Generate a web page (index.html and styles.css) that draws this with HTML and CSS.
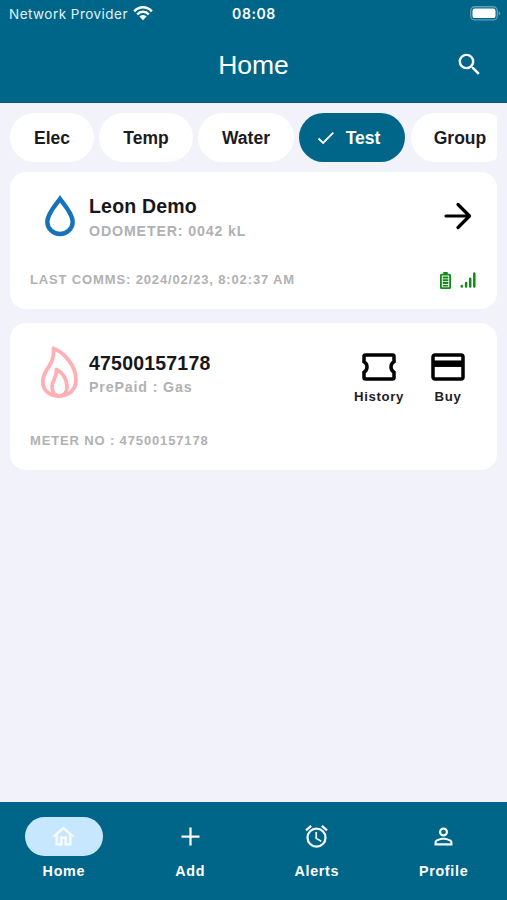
FILE: index.html
```html
<!DOCTYPE html>
<html lang="en">
<head>
<meta charset="utf-8">
<title>Home</title>
<link rel="stylesheet" href="styles.css">
</head>
<body>
<div class="app">
  <header class="top">
    <div class="status">
      <div class="carrier"><span>Network Provider</span>
        <svg class="wifi" viewBox="0 0 20 15"><path d="M1.2 5.4C6-.1 14-.1 18.8 5.4M4.2 8.5c3.2-3.6 8.4-3.6 11.6 0" fill="none" stroke="#fff" stroke-width="2.5"/><path d="M6.4 10.6c2-2 5.200-2 7.200 0L10 14.300z" fill="#fff"/></svg>
      </div>
      <span class="clock">08:08</span>
      <svg class="battery" viewBox="0 0 31 15"><rect x=".75" y=".75" width="26.500" height="13.200" rx="4" fill="none" stroke="#669fb6" stroke-width="1.300"/><rect x="2.500" y="2.600" width="23" height="9.500" rx="2.200" fill="#fff"/><path d="M28.700 5v4.800q3-2.400 0-4.800" fill="#669fb6"/></svg>
    </div>
    <div class="titlebar">
      <h1>Home</h1>
      <svg class="search" viewBox="0 0 24 24"><path d="M9.500 3A6.500 6.500 0 0 1 16 9.500c0 1.610-.59 3.090-1.560 4.230l.27.27h.79l5 5-1.500 1.500-5-5v-.79l-.27-.27A6.520 6.520 0 0 1 9.500 16a6.500 6.500 0 0 1 0-13m0 2C7 5 5 7 5 9.500S7 14 9.500 14 14 12 14 9.500 12 5 9.500 5"/></svg>
    </div>
  </header>
  <main>
    <div class="chips">
      <div class="chip elec">Elec</div>
      <div class="chip temp">Temp</div>
      <div class="chip water">Water</div>
      <div class="chip test"><svg viewBox="0 0 18 14"><path d="M1.500 7.500l4.600 4.500L16.300 1.600"/></svg>Test</div>
      <div class="chip group">Group</div>
    </div>
    <section class="card first">
      <div class="row">
        <svg class="drop" viewBox="0 0 32 42"><path d="M16 4C13 8.500 3.300 18.500 3.300 26.800a12.700 12.200 0 0 0 25.400 0C28.700 18.500 19 8.500 16 4z"/></svg>
        <div class="info"><h2>Leon Demo</h2><p class="odo">ODOMETER: 0042 kL</p></div>
        <svg class="arrow" viewBox="0 0 28 28"><path d="M2 14h23M14 2.500L25.500 14 14 25.500"/></svg>
      </div>
      <div class="foot">
        <span class="comms">LAST COMMS: 2024/02/23, 8:02:37 AM</span>
        <div class="signals">
          <svg class="cell" viewBox="0 0 11 17"><path d="M3.300 0h4.400v1.700H9.500Q11 1.700 11 3.200v12.300q0 1.500-1.500 1.500h-8Q0 17 0 15.500V3.200q0-1.500 1.500-1.500h1.800zM1.800 3.500v11.700h7.400V3.500z" fill-rule="evenodd"/><path d="M2.700 4.500h5.600v1.900H2.700zM2.700 7.300h5.600v1.900H2.700zM2.700 10.100h5.600V12H2.700zM2.700 12.900h5.600v1.700H2.700z"/></svg>
          <svg class="bars" viewBox="0 0 16 16"><path d="M1.800 14.500v-.4M6.100 14.500v-3.400M10.200 14.500V6.700M14.300 14.500v-13"/></svg>
        </div>
      </div>
    </section>
    <section class="card second">
      <div class="row">
        <svg class="flame" viewBox="0 0 38 54"><path d="M13.500 3.500C24 7 36 21 36 34.500 36 45 29 51 19 51S2.800 45 2.800 36.500C2.800 24 15 21 13.500 3.500z"/><path d="M16.500 24.500C22 27 27 34 27 41c0 6.500-3 10-7.500 10S12 47 12 41.500c0-6.500 5-8 4.500-17z"/></svg>
        <div class="info"><h2 class="number">47500157178</h2><p class="gas">PrePaid : Gas</p></div>
        <div class="action history"><svg viewBox="0 0 34 28"><path d="M3.500 2h27Q32 2 32 3.500v5.300a6 6 0 0 0 0 10.400v5.300q0 1.500-1.500 1.500h-27Q2 26 2 24.500v-5.300A6 6 0 0 0 2 8.800V3.500Q2 2 3.500 2z"/></svg><span>History</span></div>
        <div class="action buy"><svg viewBox="0 0 34 28"><rect x="2" y="2" width="30" height="24" rx="2"/><path d="M2 10.700h30" stroke-width="6.500"/></svg><span>Buy</span></div>
      </div>
      <div class="foot"><span class="meter">METER NO : 47500157178</span></div>
    </section>
  </main>
  <nav>
    <div class="tab active"><div class="pill"><svg viewBox="0 0 24 24"><path d="M12 5.690l5 4.500V18h-2v-6H9v6H7v-7.810zM12 3L2 12h3v8h6v-6h2v6h6v-8h3" stroke="#f7fcff" stroke-width=".3"/></svg></div><span>Home</span></div>
    <div class="tab"><div class="pill"><svg viewBox="0 0 24 24"><path d="M11 4h2v7h7v2h-7v7h-2v-7H4v-2h7z"/></svg></div><span>Add</span></div>
    <div class="tab"><div class="pill"><svg viewBox="0 0 24 24"><path d="M12 20a7 7 0 0 1 0-14 7 7 0 0 1 0 14m0-16a9 9 0 1 0 0 18 9 9 0 0 0 0-18m.5 4H11v6l4.750 2.850.75-1.230-4-2.370zM7.880 3.390L6.600 1.860 2 5.710l1.290 1.530zM22 5.720l-4.600-3.860-1.290 1.530 4.600 3.860z"/></svg></div><span>Alerts</span></div>
    <div class="tab"><div class="pill"><svg viewBox="0 0 24 24"><path d="M12 4a4 4 0 1 1 0 8 4 4 0 0 1 0-8m0 1.900a2.100 2.100 0 1 0 0 4.200 2.100 2.100 0 0 0 0-4.200M12 13c2.670 0 8 1.340 8 4v3H4v-3c0-2.660 5.330-4 8-4m0 1.900c-2.970 0-6.100 1.460-6.100 2.100v1.100h12.200V17c0-.64-3.130-2.100-6.100-2.100"/></svg></div><span>Profile</span></div>
  </nav>
</div>
</body>
</html>
```
FILE: styles.css
```css
* { box-sizing: border-box; }
body { margin: 0; font-family: "Liberation Sans", Arial, sans-serif; }
svg { display: block; flex: none; }
h1, h2, p { margin: 0; }
.app { width: 507px; height: 900px; display: flex; flex-direction: column; background: #f2f2fb; overflow: hidden; }
.top { height: 103px; background: #006689; color: #fff; border-bottom: 1px solid #005a7b; flex: none; }
.status { height: 27px; padding: 0 6px 0 9px; display: grid; grid-template-columns: 1fr auto 1fr; align-items: center; font-family: Inter, sans-serif; }
.carrier { display: flex; align-items: center; gap: 5px; font-size: 13.500px; letter-spacing: .47px; color: #e2f1f7; white-space: nowrap; }
.wifi { width: 20px; height: 15px; margin-top: -1px; }
.clock { font-size: 14px; font-weight: 600; letter-spacing: .6px; margin-right: 2px; }
.battery { width: 31px; height: 15px; justify-self: end; margin-top: -1px; }
.titlebar { display: grid; grid-template-columns: 1fr auto 1fr; align-items: center; height: 75px; padding: 0 23px; }
h1 { grid-column: 2; font-size: 26.500px; font-weight: 400; line-height: 30px; }
.search { width: 29px; height: 29px; fill: #fff; justify-self: end; }
main { flex: 1; padding: 10px 10px 0; }
.chips { display: flex; height: 49px; gap: 5px; overflow: hidden; border-radius: 0 6px 6px 0; }
.chip { flex: none; height: 49px; border-radius: 25px; background: #fff; color: #1b1b1d; font-size: 17.500px; font-weight: 700; display: flex; align-items: center; justify-content: center; padding-top: 1px; }
.elec { width: 84px; }
.temp { width: 94px; }
.water { width: 96px; }
.test { width: 106px; background: #006689; color: #fff; gap: 11px; padding-right: 7px; }
.test svg { width: 18px; height: 14px; fill: none; stroke: #fff; stroke-width: 1.900; }
.group { width: 98px; margin-left: 1px; }
.card { background: #fff; border-radius: 16px; padding: 0 20px; display: flex; flex-direction: column; }
.first { height: 137px; margin-top: 10px; }
.second { height: 147px; margin-top: 14px; }
.row { display: flex; align-items: flex-start; }
.first .row { height: 96px; padding-top: 23px; }
.second .row { height: 106px; padding-top: 22px; }
.drop { width: 32px; height: 42px; margin: 0 13px 0 14px; fill: none; stroke: #1673b9; stroke-width: 4.400; }
.flame { width: 38px; height: 54px; margin: 0 11px 0 10px; fill: none; stroke: #ffb0b4; stroke-width: 3.800; stroke-linejoin: round; }
.info { flex: 1; white-space: nowrap; }
h2 { color: #171719; font-size: 19.500px; line-height: 24px; letter-spacing: .2px; }
.first h2 { margin-top: -1px; margin-bottom: 1px; }
.info p { color: #b0b1b3; font-size: 14.200px; font-weight: 700; line-height: 24px; letter-spacing: .86px; }
.second .info { padding-top: 6px; }
.arrow { width: 28px; height: 28px; margin: 7px 5px 0 0; fill: none; stroke: #000; stroke-width: 3.200; stroke-linecap: round; stroke-linejoin: round; }
.foot { display: flex; justify-content: space-between; align-items: center; height: 24px; color: #b0b1b3; font-size: 13px; font-weight: 700; letter-spacing: .86px; white-space: nowrap; }
.foot > span { padding-bottom: 2px; }
.signals { display: flex; align-items: center; gap: 9px; fill: #128b16; margin-right: 1px; }
.cell { width: 11px; height: 17px; }
.bars { width: 16px; height: 16px; fill: none; stroke: #128b16; stroke-width: 2.500; stroke-linecap: round; }
.action { display: flex; flex-direction: column; align-items: center; color: #222; font-size: 13.200px; font-weight: 700; letter-spacing: .65px; padding-top: 8px; }
.action svg { width: 34px; height: 28px; fill: none; stroke: #000; stroke-width: 3.500; }
.action span { line-height: 18px; margin-top: 7px; }
.history { width: 54px; }
.buy { width: 30px; margin: 0 14px 0 27px; }
nav { height: 98px; flex: none; background: #006689; display: grid; grid-template-columns: repeat(4, 1fr); padding-top: 15px; color: #fff; }
.tab { display: flex; flex-direction: column; align-items: center; gap: 5px; font-size: 14.300px; font-weight: 700; line-height: 20px; letter-spacing: .7px; }
.active { padding-left: 1px; }
.pill { width: 78px; height: 39px; border-radius: 20px; display: flex; align-items: center; justify-content: center; }
.active .pill { background: #c7e7ff; }
.pill svg { width: 27px; height: 27px; fill: #f7fcff; }
```
